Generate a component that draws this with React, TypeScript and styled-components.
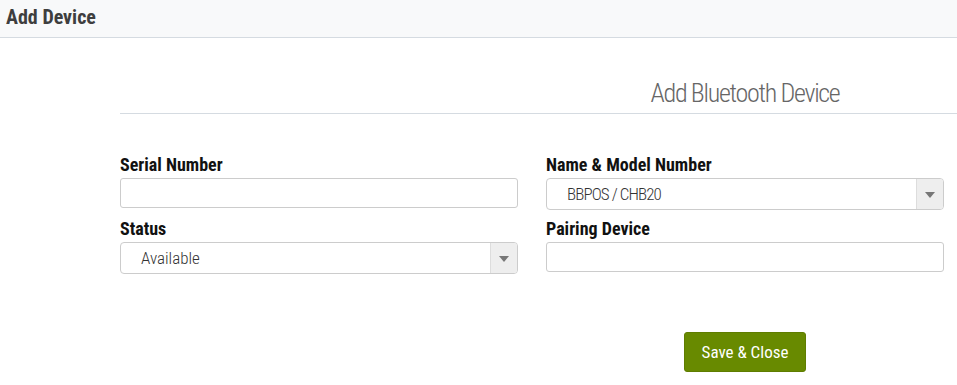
import React from "react";
import styled, { createGlobalStyle } from "styled-components";

const GlobalStyle = createGlobalStyle`
  html, body {
    margin: 0;
    padding: 0;
    background: #ffffff;
    font-family: "Roboto Condensed", "DejaVu Sans Condensed", sans-serif;
  }
`;

const Page = styled.div`
  width: 957px;
  min-height: 385px;
  background: #fff;
`;

const Header = styled.header`
  height: 38px;
  box-sizing: border-box;
  background: #f8f9fa;
  border-bottom: 1px solid #d5dbe1;
  display: flex;
  align-items: center;
  padding: 0 0 4px 6px;
`;

const HeaderTitle = styled.h1`
  margin: 0;
  font-size: 20px;
  font-weight: 700;
  color: #3e3e3e;
`;

const Body = styled.main`
  padding: 38px 0 0 120px;
`;

const TitleRow = styled.div`
  display: grid;
  grid-template-columns: 398px 398px;
  column-gap: 28px;
  border-bottom: 1px solid #d5dbe1;
  padding-bottom: 3px;
`;

const SubTitle = styled.h2`
  grid-column: 2;
  margin: 0;
  text-align: center;
  font-size: 26px;
  font-weight: 300;
  color: #666;
  letter-spacing: -1.3px;
  line-height: 34px;
`;

const Form = styled.form`
  display: grid;
  grid-template-columns: 398px 398px;
  column-gap: 28px;
  row-gap: 9px;
  margin-top: 41px;
`;

const Field = styled.div`
  display: flex;
  flex-direction: column;
`;

const Label = styled.label`
  font-size: 18px;
  font-weight: 700;
  color: #111;
  line-height: 20px;
  margin-bottom: 3px;
`;

const Input = styled.input`
  box-sizing: border-box;
  height: 30px;
  width: 100%;
  border: 1px solid #ccc;
  border-radius: 3px;
  background: #fff;
  font: inherit;
  outline: none;
`;

const SelectBox = styled.div`
  box-sizing: border-box;
  height: 32px;
  width: 100%;
  border: 1px solid #ccc;
  border-radius: 4px;
  background: #fff;
  display: flex;
  align-items: stretch;
  overflow: hidden;
`;

const SelectValue = styled.span<{ $tight?: boolean }>`
  flex: 1;
  display: flex;
  align-items: center;
  padding-left: 20px;
  font-size: 17px;
  font-weight: 300;
  color: #333;
  letter-spacing: ${(p) => (p.$tight ? "-0.9px" : "0")};
`;

const SelectArrow = styled.span`
  width: 26px;
  background: #eeeeee;
  border-left: 1px solid #ddd;
  display: flex;
  align-items: center;
  justify-content: center;
  &::after {
    content: "";
    border-left: 5px solid transparent;
    border-right: 5px solid transparent;
    border-top: 6px solid #777;
    margin-top: 2px;
  }
`;

const Actions = styled.div`
  display: grid;
  grid-template-columns: 398px 398px;
  column-gap: 28px;
  margin-top: 58px;
`;

const SaveButton = styled.button`
  grid-column: 2;
  justify-self: center;
  height: 40px;
  padding: 0 17px;
  border: 1px solid #5f7d00;
  border-radius: 3px;
  background: #688a00;
  color: #fff;
  font-family: inherit;
  font-size: 17px;
  cursor: pointer;
`;

function Select({ value, tight }: { value: string; tight?: boolean }) {
  return (
    <SelectBox>
      <SelectValue $tight={tight}>{value}</SelectValue>
      <SelectArrow />
    </SelectBox>
  );
}

export default function App() {
  return (
    <Page>
      <GlobalStyle />
      <Header>
        <HeaderTitle>Add Device</HeaderTitle>
      </Header>
      <Body>
        <TitleRow>
          <SubTitle>Add Bluetooth Device</SubTitle>
        </TitleRow>
        <Form onSubmit={(e) => e.preventDefault()}>
          <Field>
            <Label>Serial Number</Label>
            <Input type="text" />
          </Field>
          <Field>
            <Label>Name &amp; Model Number</Label>
            <Select value="BBPOS / CHB20" tight />
          </Field>
          <Field>
            <Label>Status</Label>
            <Select value="Available" />
          </Field>
          <Field>
            <Label>Pairing Device</Label>
            <Input type="text" />
          </Field>
        </Form>
        <Actions>
          <SaveButton type="button">Save &amp; Close</SaveButton>
        </Actions>
      </Body>
    </Page>
  );
}
